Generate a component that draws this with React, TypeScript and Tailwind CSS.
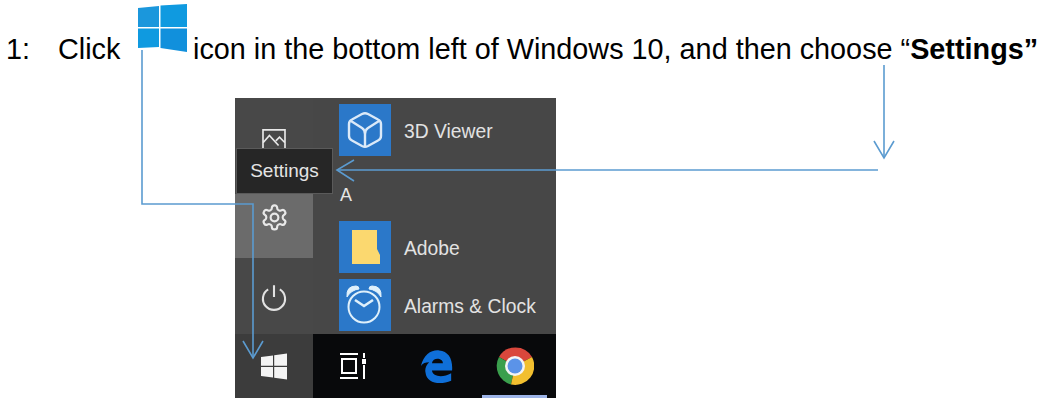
import React from 'react';

const Tile = ({ children }: { children: React.ReactNode }) => (
  <div className="flex h-[52px] w-[52px] items-center justify-center bg-[#2b78c9]">{children}</div>
);

const AppRow = ({ label, icon, className }: { label: string; icon: React.ReactNode; className: string }) => (
  <div className={`flex items-center gap-[13px] ${className}`}>
    <Tile>{icon}</Tile>
    <span className="relative top-[2px] text-[19.3px] text-[#e2e2e2]">{label}</span>
  </div>
);

export default function App() {
  return (
    <div className="relative h-[406px] w-[1054px] overflow-hidden bg-white font-['Liberation_Sans',Arial,sans-serif] text-black">
      {/* Instruction line */}
      <div className="flex h-[98px] items-start whitespace-nowrap pl-[6px] pt-[32px] text-[28.8px] leading-[34px]">
        <span className="w-[52px]">1:</span>
        <span className="w-[80px]">Click</span>
        <svg viewBox="0 0 50 48" className="-mt-[28px] h-[48px] w-[50px] shrink-0">
          <path d="M0 4 L21 2 V23 H0 Z" fill="#1b97dc" />
          <path d="M22.5 1.5 L49 0 V23 H22.5 Z" fill="#0f9ae0" />
          <path d="M0 24.5 H21 V43 L0 44 Z" fill="#0f9ae0" />
          <path d="M22.5 24.5 H49 V48 L22.5 44 Z" fill="#1190dc" />
        </svg>
        <span className="ml-[5px]">
          icon in the bottom left of Windows 10, and then choose “<b>Settings”</b>
        </span>
      </div>

      {/* Start menu */}
      <div className="ml-[235px] flex h-[300px] w-[321px] flex-col bg-[#474747]">
        <div className="flex h-[236px]">
          <div className="flex w-[78px] flex-col items-center bg-[#484848]">
            <svg viewBox="0 0 26 24" className="mt-[31px] h-[22px] w-[26px] text-[#e8e8e8]" fill="none" stroke="currentColor" strokeWidth="1.8">
              <path d="M1 1 H25 V23 H1 Z M1 15 L8 7 L18 18 M15 13 L19 9 L25 15" />
            </svg>
            <div className="mt-[43px] flex h-[64px] w-full justify-center bg-[#6b6b6b] pt-[9px]">
              <svg viewBox="0 0 24 24" className="h-[29px] w-[29px] text-[#e8e8e8]" fill="none" stroke="currentColor" strokeWidth="1.8">
                <path d="M12.2 2h-.4a2 2 0 0 0-2 2v.2a2 2 0 0 1-1 1.7l-.4.2a2 2 0 0 1-2 0l-.2-.1a2 2 0 0 0-2.7.7l-.2.4a2 2 0 0 0 .7 2.7l.2.1a2 2 0 0 1 1 1.7v.5a2 2 0 0 1-1 1.8l-.2.1a2 2 0 0 0-.7 2.7l.2.4a2 2 0 0 0 2.7.7l.2-.1a2 2 0 0 1 2 0l.4.2a2 2 0 0 1 1 1.7v.2a2 2 0 0 0 2 2h.4a2 2 0 0 0 2-2v-.2a2 2 0 0 1 1-1.7l.4-.2a2 2 0 0 1 2 0l.2.1a2 2 0 0 0 2.7-.7l.2-.4a2 2 0 0 0-.7-2.7l-.2-.1a2 2 0 0 1-1-1.8v-.5a2 2 0 0 1 1-1.7l.2-.1a2 2 0 0 0 .7-2.7l-.2-.4a2 2 0 0 0-2.7-.7l-.2.1a2 2 0 0 1-2 0l-.4-.2a2 2 0 0 1-1-1.7V4a2 2 0 0 0-2-2z" />
                <circle cx="12" cy="12" r="3.2" />
              </svg>
            </div>
            <svg viewBox="0 0 24 24" className="mt-[25px] h-[28px] w-[28px] text-[#e2e2e2]" fill="none" stroke="currentColor" strokeWidth="1.8">
              <path d="M12 2 V12 M7 5.5 A9.5 9.5 0 1 0 17 5.5" />
            </svg>
          </div>
          <div className="flex flex-1 flex-col pl-[26px] pt-[6px]">
            <AppRow
              label="3D Viewer"
              className="h-[52px]"
              icon={
                <svg viewBox="0 0 40 40" className="h-[40px] w-[40px] text-[#dbe9f8]" fill="none" stroke="currentColor" strokeWidth="2.4" strokeLinejoin="round" strokeLinecap="round">
                  <path d="M17 4 Q20 2.5 23 4 L33 9.5 Q36 11 36 14 V26 Q36 29 33 30.5 L23 36 Q20 37.5 17 36 L7 30.5 Q4 29 4 26 V14 Q4 11 7 9.5 Z" />
                  <path d="M6 11 L17 18 Q20 20 20 24 V36 M34 11 L23 18 Q20 20 20 24" />
                </svg>
              }
            />
            <span className="mt-[27px] h-[25px] pl-[1px] text-[18px] font-medium leading-[25px] text-[#e6e6e6]">A</span>
            <AppRow
              label="Adobe"
              className="mt-[13px] h-[52px]"
              icon={
                <svg viewBox="0 0 52 52" className="h-[52px] w-[52px]">
                  <path d="M13 9 H38 V28 L41 34 V43 H13 Z" fill="#fbd86f" />
                </svg>
              }
            />
            <AppRow
              label="Alarms & Clock"
              className="mt-[6px] h-[52px]"
              icon={
                <svg viewBox="0 0 52 52" className="h-[52px] w-[52px]" fill="none" stroke="#dff0fb" strokeWidth="2">
                  <path d="M8 18 Q7 7 17 7 Q20 7 20 10 Q12 11 8 18 Z M42 18 Q43 7 33 7 Q30 7 30 10 Q38 11 42 18 Z" fill="#dff0fb" strokeWidth="1" />
                  <circle cx="25" cy="28" r="15.5" />
                  <path d="M16 21 L25 27 L34 21" strokeWidth="2.6" />
                </svg>
              }
            />
          </div>
        </div>
        <div className="flex h-[64px]">
          <div className="flex w-[78px] items-center justify-center bg-[#3c3c3c]">
            <svg viewBox="0 0 26 27" className="h-[27px] w-[26px] text-[#f4f4f4]">
              <path d="M0 4 L12 2.5 V12.8 H0 Z M13.2 2.3 L26 0.5 V12.8 H13.2 Z M0 14 H12 V24.5 L0 23 Z M13.2 14 H26 V26.5 L13.2 24.7 Z" fill="currentColor" />
            </svg>
          </div>
          <div className="relative flex flex-1 items-center bg-[#08090b]">
            <svg viewBox="0 0 30 28" className="ml-[26px] h-[28px] w-[30px] text-white" fill="none" stroke="currentColor" strokeWidth="2">
              <path d="M1 2 H19 M1 26 H19 M3 7 H17 V21 H3 Z" />
              <path d="M25 1 V6 M25 13 V27" />
              <rect x="23" y="7" width="4" height="5" fill="currentColor" stroke="none" />
            </svg>
            <svg viewBox="0 0 36 38" className="ml-[51px] h-[38px] w-[33px]">
              <path d="M1 19 C4 6 13 1 21 2 C31 3 36 11 35 24 H13 C14 31 25 32 34 27 V35 C22 40 7 38 6 26 C5 22 7 18 10 15 C6 15 3 16 1 19 Z M13 16 H25 C25 10 14 9 13 16 Z" fill="#0f6fd8" fillRule="evenodd" />
            </svg>
            <svg viewBox="0 0 38 38" className="ml-[43px] h-[38px] w-[38px]">
              <path d="M19 19 L3 10 A19 19 0 0 1 36 10 Z" fill="#d9473c" />
              <path d="M19 19 L3 10 A19 19 0 0 0 15 37.5 Z" fill="#3a9f4d" />
              <path d="M19 19 L36 10 A19 19 0 0 1 15 37.5 Z" fill="#f2bf2f" />
              <circle cx="19" cy="19" r="10" fill="#f4f4f4" />
              <circle cx="19" cy="19" r="7.5" fill="#5b93e8" />
            </svg>
            <div className="absolute bottom-0 left-[169px] h-[3px] w-[65px] bg-[#9db4e8]" />
          </div>
        </div>
      </div>

      {/* Tooltip */}
      <div className="absolute left-[236px] top-[148px] flex h-[46px] w-[97px] items-center justify-center border border-[#5a5a5a] bg-[#262626] text-[19px] text-[#e4e4e4]">
        Settings
      </div>

      {/* Callout arrows */}
      <svg viewBox="0 0 1054 406" className="absolute left-0 top-0 h-[406px] w-[1054px]" fill="none" stroke="#5b9bd0" strokeWidth="1.6">
        <path d="M142 50 V204 H253 V358" />
        <path d="M243 341 L253 358 L263 341" />
        <path d="M884 65 V158" />
        <path d="M874 141 L884 158 L894 141" />
        <path d="M878 170 H337" />
        <path d="M354 160 L337 170 L354 181" />
      </svg>
    </div>
  );
}
